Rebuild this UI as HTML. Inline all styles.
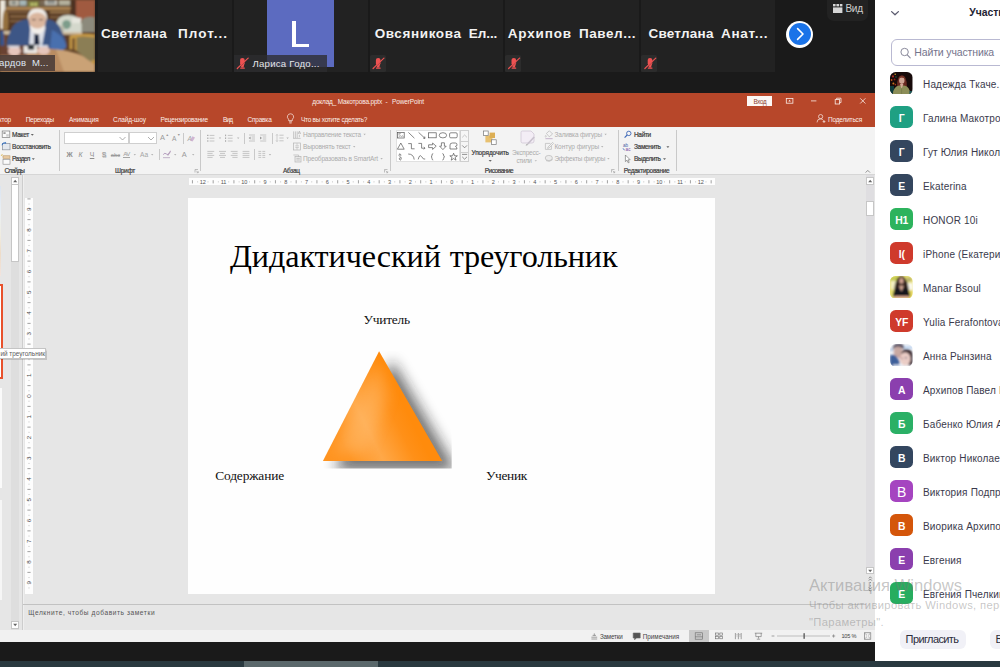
<!DOCTYPE html>
<html><head><meta charset="utf-8">
<style>
*{margin:0;padding:0;box-sizing:border-box}
html,body{width:1000px;height:667px;overflow:hidden;background:#1a1a1a;font-family:"Liberation Sans",sans-serif;}
.a{position:absolute}
#root{position:relative;width:1000px;height:667px;overflow:hidden;background:#1a1a1a}
.t{position:absolute;white-space:nowrap;line-height:1}
/* top strip */
.tile{position:absolute;top:0;height:72px;background:#222}
.tname{position:absolute;color:#f2f2f2;font-weight:bold;font-size:13.5px;white-space:pre;line-height:1;top:27px}
.mute{position:absolute;top:54.8px;width:15.5px;height:17px;background:#2c2c2c;border-radius:1.5px}
/* ppt */
#ppt{position:absolute;left:0;top:93px;width:875px;height:549px;background:#e6e6e6;overflow:hidden}
#ptitle{position:absolute;left:0;top:0;width:875px;height:34px;background:#b7472a}
#ribbon{position:absolute;left:0;top:34px;width:875px;height:48px;background:#f3f3f3;border-bottom:1px solid #d6d6d6}
.tab{position:absolute;top:21px;color:#fff;font-size:6.6px;line-height:1;white-space:nowrap;opacity:.92}
.rl{position:absolute;font-size:6.3px;color:#444;line-height:1;white-space:nowrap}
.rg{position:absolute;font-size:6.3px;color:#a8a8a8;line-height:1;white-space:nowrap}
.sep{position:absolute;top:37px;width:1px;height:41px;background:#c9c9c9}
/* panel */
#panel{position:absolute;left:875px;top:0;width:125px;height:660px;background:#fff;overflow:hidden}
.av{position:absolute;left:15px;width:23px;height:23px;border-radius:6px;color:#fff;font-weight:bold;font-size:9.5px;text-align:center;line-height:23px}
.pn{position:absolute;left:48px;font-size:9.6px;color:#3a3a44;white-space:nowrap;line-height:1}
</style></head><body>
<div id="root">

<!-- ===== TOP VIDEO STRIP ===== -->
<div class="tile" style="left:0;width:95px;overflow:hidden" id="vid">
<svg width="95" height="72" viewBox="0 0 95 72" style="position:absolute;left:0;top:0">
<defs><filter id="b1" x="-10%" y="-10%" width="120%" height="120%"><feGaussianBlur stdDeviation="0.8"/></filter></defs>
<rect width="95" height="72" fill="#5e4128"/>
<g filter="url(#b1)">
<!-- shelf back -->
<rect x="5" y="0" width="70" height="34" fill="#543923"/>
<rect x="0" y="0" width="5.4" height="29" fill="#ece7dc"/>
<rect x="5" y="0" width="68" height="7" fill="#6b5a44"/>
<rect x="9.6" y="0" width="8.6" height="5.6" fill="#dcd8cc"/>
<rect x="11" y="0.6" width="5.6" height="4" fill="#8c8f86"/>
<rect x="19.4" y="0" width="7" height="5.6" fill="#a4b6b8"/>
<rect x="27.6" y="0.8" width="11.4" height="6" fill="#7e7c42"/>
<circle cx="32" cy="4.2" r="1.5" fill="#c6cc74"/><circle cx="35.6" cy="4.2" r="1.5" fill="#c6cc74"/>
<rect x="40.6" y="0" width="4" height="5" fill="#7a6a58"/>
<rect x="45" y="0" width="12" height="5" fill="#c4c0b4"/>
<rect x="47" y="0" width="8" height="3.6" fill="#8a8e8a"/>
<rect x="59" y="0" width="11" height="5" fill="#b4b09c"/>
<rect x="6" y="7.2" width="66" height="2.6" fill="#b58a58"/>
<rect x="8" y="11" width="20" height="2" fill="#7c5c3c"/>
<rect x="10" y="15.4" width="18" height="2.2" fill="#8a6846"/>
<rect x="10" y="20" width="16" height="2.2" fill="#7c5c3c"/>
<rect x="50" y="11" width="20" height="2.4" fill="#94724a"/>
<rect x="50" y="16" width="9" height="2.2" fill="#7c5c3c"/>
<path d="M4.4 10 Q8.4 7.6 8.6 22 L7.6 33 L2.6 31 Q2 16 4.4 10 Z" fill="#94703c"/>
<rect x="70.6" y="0" width="5.4" height="22" fill="#4e3220"/>
<rect x="76" y="0" width="19" height="21" fill="#a05a40"/>
<!-- desk behind -->
<rect x="0" y="30" width="95" height="19" fill="#5c3e28"/>
<rect x="3" y="31" width="12" height="3.6" fill="#cdbb9e"/>
<rect x="58" y="31.6" width="24" height="3" fill="#d0bea2"/>
<rect x="2" y="34" width="3.4" height="14" fill="#7a4e2c"/>
<!-- paper stack & chair back -->
<path d="M56 24 Q58 15 68 15 Q79 15 82 24 L82 32 L56 32 Z" fill="#d4d8cc"/>
<ellipse cx="66.6" cy="24.6" rx="4.4" ry="4.6" fill="#7c9c8a"/>
<rect x="57" y="26" width="7" height="6" fill="#b8b8a8"/>
<rect x="72" y="18" width="9" height="5" fill="#e6e6de"/>
<path d="M81.6 19.4 Q88 15 95 17.6 L95 32 L81.6 32 Z" fill="#8c8a7c"/>
<!-- suit -->
<path d="M6.6 50 Q6 38 11 30 Q14 21.6 25 19.6 L50 19.6 Q59 22 62 32 Q66.6 40 66 47 L62 51.6 L50 49 L40 46 L18 46 Z" fill="#3d5786"/>
<path d="M52 30 Q62 34 66 44 L66 48 L60 51.6 L50 48 Z" fill="#4a70ae"/>
<path d="M0 30 L3.6 31.6 L4.4 46 L0 48.6 Z" fill="#35528c"/>
<path d="M30.4 27 L45.6 27 L42 46 L29 46 Z" fill="#dcdfe8"/>
<path d="M34.6 32.6 L38.6 32.6 L39.6 45 L34 45 Z" fill="#1c2640"/>
<!-- head -->
<ellipse cx="37.4" cy="20" rx="8.6" ry="11" fill="#dab69e"/>
<path d="M28 21 Q26.6 8.4 37.4 8.4 Q48.2 8.4 46.8 21 Q45.6 13 37.4 12.6 Q29.4 13 28 21 Z" fill="#efebe6"/>
<path d="M29.4 24 Q30.6 34 37.4 34.4 Q44.2 34 45.4 24 Q42.4 28.6 37.4 28.6 Q32.4 28.6 29.4 24 Z" fill="#f2eeea"/>
<rect x="32" y="19" width="3.6" height="1.2" fill="#6a5248"/><rect x="39.2" y="19" width="3.6" height="1.2" fill="#6a5248"/>
<!-- table -->
<path d="M0 49.6 L52 49 Q76 50 95 62.6 L95 72 L0 72 Z" fill="#b98c62"/>
<path d="M56 49.6 Q78 51 95 63 L95 72 L64 72 Z" fill="#caa276"/>
<rect x="0" y="45.6" width="27" height="10" fill="#6a4230"/>
<rect x="23.6" y="46" width="13.6" height="7.4" fill="#ebe8e4"/>
<rect x="27.8" y="44.6" width="6.4" height="5.2" rx="1" fill="#33383e"/>
<ellipse cx="14.4" cy="51" rx="6.4" ry="5" fill="#e6c6bc"/>
<ellipse cx="43.6" cy="50.4" rx="6.2" ry="4.4" fill="#e6c6bc"/>
<rect x="7.6" y="45.6" width="12" height="2" fill="#d8dce6"/>
<rect x="38" y="45.2" width="10" height="1.8" fill="#d8dce6"/>
<!-- chair -->
<path d="M76.4 37 L95 37 L95 64 L88 60 L76.4 51 Z" fill="#8b7e54"/>
<path d="M69.6 35.6 Q80 32.6 95 34.4 L95 37.6 Q80 36 76.6 37.6 L76.6 51 L74.6 50 L74.6 38 L72.4 38.6 L72.4 49.6 L69.6 49.6 Z" fill="#c69a46"/>
<rect x="92" y="60" width="3" height="4" fill="#c69a46"/>
</g>
</svg>
<div class="a" style="left:0;top:55.2px;width:55px;height:16.3px;background:rgba(80,64,58,.93)"></div>
<div class="t" style="left:-1px;top:58.4px;font-size:9.5px;color:#dfe8f4;white-space:pre;letter-spacing:.2px">ардов  М...</div>
</div>
<div class="tile" style="left:95px;width:137px;background:#212121"></div>
<div class="tile" style="left:234px;width:134px"></div>
<div class="tile" style="left:370px;width:133px"></div>
<div class="tile" style="left:505px;width:134px"></div>
<div class="tile" style="left:641px;width:134px"></div>
<div class="a" style="left:95px;top:0;width:2.5px;height:72px;background:#1b1b1b"></div>

<!-- L avatar -->
<div class="a" style="left:267px;top:0;width:67px;height:67px;background:#5c6bc0"></div>
<div class="a" style="left:291.9px;top:20.9px;width:4.6px;height:26.1px;background:#fff"></div>
<div class="a" style="left:291.9px;top:43.7px;width:16.8px;height:3.3px;background:#fff"></div>
<div class="a" style="left:234px;top:55px;width:93px;height:16.5px;background:rgba(45,45,48,.78)"></div>
<div class="t" style="left:252.5px;top:58.51px;font-size:9.6px;color:#e6e6e6;letter-spacing:0.244px;">Лариса Годо...</div>

<div class="tname" style="left:101px;letter-spacing:.34px">Светлана</div>
<div class="tname" style="left:178px;letter-spacing:1.05px">Плот...</div>
<div class="tname" style="left:374.7px;letter-spacing:.61px">Овсяникова</div>
<div class="tname" style="left:468.8px;letter-spacing:-.08px">Ел...</div>
<div class="tname" style="left:507.8px;letter-spacing:.81px">Архипов</div>
<div class="tname" style="left:579px;letter-spacing:.55px">Павел...</div>
<div class="tname" style="left:648.4px;letter-spacing:.24px">Светлана</div>
<div class="tname" style="left:720.9px;letter-spacing:.77px">Анат...</div>

<!-- mute icons -->
<div class="mute" style="left:234px;background:none"></div>
<div class="mute" style="left:370px"></div>
<div class="mute" style="left:505px"></div>
<div class="mute" style="left:641px"></div>
<svg class="a" style="left:0;top:0" width="800" height="72" viewBox="0 0 800 72">
<defs><g id="mic"><rect x="-2.3" y="-5.5" width="4.6" height="7.6" rx="2.2" fill="#ee5252"/><path d="M-1.7 1.6 H1.7 L1.1 4.2 H-1.1 Z" fill="#ee5252"/><rect x="-2.2" y="4" width="4.6" height="1.4" rx=".4" fill="#ee5252"/><path d="M-5.1 5.1 L5.8 -5.3" stroke="#ee5252" stroke-width="1.3" stroke-linecap="round"/><path d="M-4.4 5.4 L6.3 -4.8" stroke="#2c2c2c" stroke-width=".5" opacity=".6"/></g></defs>
<use href="#mic" x="242.4" y="63.4"/>
<use href="#mic" x="378.2" y="63.4"/>
<use href="#mic" x="513.8" y="63.4"/>
<use href="#mic" x="650" y="63.4"/>
</svg>

<!-- next arrow -->
<div class="a" style="left:786px;top:20.5px;width:27px;height:27px;border-radius:50%;background:#fff"></div>
<div class="a" style="left:788.5px;top:23px;width:22px;height:22px;border-radius:50%;background:#1a73e8"></div>
<svg class="a" style="left:788.5px;top:23px" width="22" height="22" viewBox="0 0 22 22"><path d="M8.6 5.6 L14 11 L8.6 16.4" stroke="#fff" stroke-width="1.6" fill="none" stroke-linecap="round" stroke-linejoin="round"/></svg>

<!-- Vid button -->
<div class="a" style="left:827px;top:-6px;width:41px;height:27px;background:#222;border-radius:7px"></div>
<svg class="a" style="left:833px;top:4px" width="10" height="10" viewBox="0 0 10 10"><rect x="0" y="0" width="2.6" height="2.4" fill="#d6d6d6"/><rect x="3.4" y="0" width="2.6" height="2.4" fill="#d6d6d6"/><rect x="6.8" y="0" width="2.6" height="2.4" fill="#d6d6d6"/><rect x="0" y="3.4" width="9.4" height="5.6" fill="#d6d6d6"/></svg>
<div class="t" style="left:845.5px;top:3.60px;font-size:10px;color:#cfcfcf;letter-spacing:-0.297px;">Вид</div>

<!-- ===== POWERPOINT ===== -->
<div id="ppt">
  <div id="ptitle"></div>
  <div id="ribbon"></div>
</div>
<!-- title bar text (absolute page coords) -->
<div class="t" style="right:989px;top:116.5px;font-size:6.5px;color:#fbeee9;letter-spacing:-.2px">Конструктор</div>
<div class="t" style="left:25.7px;top:116.51px;font-size:6.5px;color:#fbeee9;letter-spacing:-0.271px;">Переходы</div>
<div class="t" style="left:68.9px;top:116.51px;font-size:6.5px;color:#fbeee9;letter-spacing:-0.088px;">Анимация</div>
<div class="t" style="left:113.1px;top:116.51px;font-size:6.5px;color:#fbeee9;letter-spacing:-0.113px;">Слайд-шоу</div>
<div class="t" style="left:160.6px;top:116.51px;font-size:6.5px;color:#fbeee9;letter-spacing:-0.208px;">Рецензирование</div>
<div class="t" style="left:222.9px;top:116.51px;font-size:6.5px;color:#fbeee9;letter-spacing:-0.783px;">Вид</div>
<div class="t" style="left:247.4px;top:116.51px;font-size:6.5px;color:#fbeee9;letter-spacing:-0.183px;">Справка</div>
<div class="t" style="left:301px;top:116.51px;font-size:6.5px;color:#fbeee9;letter-spacing:-0.265px;">Что вы хотите сделать?</div>
<div class="t" style="left:827.9px;top:116.51px;font-size:6.5px;color:#fbeee9;letter-spacing:-0.178px;">Поделиться</div>
<div class="t" style="left:312.3px;top:99.30px;font-size:6.5px;color:#fbeee9;letter-spacing:-0.183px;">доклад_ Макотрова.pptx</div>
<div class="t" style="left:385.5px;top:99.30px;font-size:6.5px;color:#fbeee9;">-</div>
<div class="t" style="left:392px;top:99.30px;font-size:6.5px;color:#fbeee9;letter-spacing:-0.139px;">PowerPoint</div>
<!-- bulb -->
<svg class="a" style="left:286px;top:113px" width="9" height="11" viewBox="0 0 9 11"><path d="M4.5 0.8 A3 3 0 0 1 6.4 6.2 V7.6 H2.6 V6.2 A3 3 0 0 1 4.5 0.8 Z" fill="none" stroke="#fbeee9" stroke-width=".7"/><path d="M3 8.8 H6 M3.4 10 H5.6" stroke="#fbeee9" stroke-width=".7"/></svg>
<!-- Vhod button -->
<div class="a" style="left:747.3px;top:96px;width:25px;height:10.2px;background:#fdf8f5"></div>
<div class="t" style="left:753.5px;top:98.81px;font-size:6.3px;color:#8a4030;letter-spacing:-0.383px;">Вход</div>
<!-- window controls -->
<svg class="a" style="left:780px;top:94px" width="95" height="30" viewBox="0 0 95 30">
<rect x="6.3" y="4.4" width="6.6" height="4.8" fill="none" stroke="#fbeee9" stroke-width=".8"/><path d="M8.3 7.6 L9.6 5.8 L10.9 7.6 Z" fill="#fbeee9"/>
<path d="M31 6.9 H36.4" stroke="#fbeee9" stroke-width=".8"/>
<rect x="55.2" y="5.6" width="4.4" height="4.4" fill="none" stroke="#fbeee9" stroke-width=".8"/><path d="M56.6 5.6 V4.2 H61 V8.6 H59.6" fill="none" stroke="#fbeee9" stroke-width=".8"/>
<path d="M80.2 4.3 L85.4 9.5 M85.4 4.3 L80.2 9.5" stroke="#fbeee9" stroke-width=".8"/>
<circle cx="40.6" cy="22.6" r="2.1" fill="none" stroke="#fbeee9" stroke-width=".7"/><path d="M37 28.4 Q37 24.9 40.6 24.9 Q42.6 24.9 43.4 26.4" fill="none" stroke="#fbeee9" stroke-width=".7"/><path d="M42.6 27.6 H45.4 M44 26.2 V29" stroke="#fbeee9" stroke-width=".7"/>
</svg>

<!-- ribbon: slides group -->
<svg class="a" style="left:0;top:128px" width="12" height="40" viewBox="0 0 12 40">
<rect x="2.2" y="3" width="7.6" height="6.6" fill="#fafafa" stroke="#7d7d7d" stroke-width=".7"/><rect x="3.4" y="4.2" width="2.2" height="1.8" fill="#9a9a9a"/><rect x="6.2" y="6.2" width="2.6" height="2.4" fill="#cfcfcf"/>
<rect x="2.4" y="15.6" width="7.6" height="6.2" fill="#e4e8ee" stroke="#8a9099" stroke-width=".7"/><path d="M2 17.2 Q2.4 14.4 5.2 14.8" fill="none" stroke="#2f6fc4" stroke-width="1"/><path d="M5 13.8 L6.4 14.9 L4.9 15.9 Z" fill="#2f6fc4"/>
<rect x="3" y="27.8" width="7" height="2.6" fill="#e8c9a0" stroke="#b08a58" stroke-width=".5"/><rect x="3" y="31.6" width="7" height="4.6" fill="#fafafa" stroke="#8a8a8a" stroke-width=".6"/><path d="M1.4 27.2 L2.4 26.2 M2.4 28.2 L1.4 27.2" stroke="#d8a520" stroke-width=".8"/>
</svg>
<div class="t" style="left:12.1px;top:131.91px;font-size:6.5px;color:#3d3d3d;letter-spacing:-0.302px;-webkit-text-stroke:.2px #3d3d3d">Макет</div>
<div class="t" style="left:12.1px;top:144.00px;font-size:6.5px;color:#3d3d3d;letter-spacing:-0.248px;-webkit-text-stroke:.2px #3d3d3d">Восстановить</div>
<div class="t" style="left:12.1px;top:156.10px;font-size:6.5px;color:#3d3d3d;letter-spacing:-0.637px;-webkit-text-stroke:.2px #3d3d3d">Раздел</div>
<div class="t" style="left:4.4px;top:168.10px;font-size:6.5px;color:#3d3d3d;letter-spacing:-0.741px;-webkit-text-stroke:.2px #3d3d3d">Слайды</div>
<div class="t" style="left:115px;top:168.10px;font-size:6.5px;color:#3d3d3d;letter-spacing:-0.273px;-webkit-text-stroke:.2px #3d3d3d">Шрифт</div>
<div class="t" style="left:283px;top:168.10px;font-size:6.5px;color:#3d3d3d;letter-spacing:-0.309px;-webkit-text-stroke:.2px #3d3d3d">Абзац</div>
<div class="t" style="left:484.7px;top:168.10px;font-size:6.5px;color:#3d3d3d;letter-spacing:-0.469px;-webkit-text-stroke:.2px #3d3d3d">Рисование</div>
<div class="t" style="left:623.7px;top:168.10px;font-size:6.5px;color:#3d3d3d;letter-spacing:-0.270px;-webkit-text-stroke:.2px #3d3d3d">Редактирование</div>
<div class="t" style="left:471.5px;top:149.91px;font-size:6.5px;color:#3d3d3d;letter-spacing:-0.129px;-webkit-text-stroke:.2px #3d3d3d">Упорядочить</div>
<div class="t" style="left:634px;top:131.91px;font-size:6.5px;color:#3d3d3d;letter-spacing:-0.341px;-webkit-text-stroke:.2px #3d3d3d">Найти</div>
<div class="t" style="left:634px;top:144.00px;font-size:6.5px;color:#3d3d3d;letter-spacing:-0.317px;-webkit-text-stroke:.2px #3d3d3d">Заменить</div>
<div class="t" style="left:634px;top:156.10px;font-size:6.5px;color:#3d3d3d;letter-spacing:-0.429px;-webkit-text-stroke:.2px #3d3d3d">Выделить</div>
<div class="t" style="left:303px;top:131.91px;font-size:6.5px;color:#ababab;letter-spacing:-0.207px;">Направление текста</div>
<div class="t" style="left:303px;top:144.00px;font-size:6.5px;color:#ababab;letter-spacing:-0.203px;">Выровнять текст</div>
<div class="t" style="left:303px;top:156.10px;font-size:6.5px;color:#ababab;letter-spacing:-0.167px;">Преобразовать в SmartArt</div>
<div class="t" style="left:512px;top:149.91px;font-size:6.5px;color:#ababab;letter-spacing:-0.183px;">Экспресс-</div>
<div class="t" style="left:516.4px;top:158.31px;font-size:6.5px;color:#ababab;letter-spacing:-0.424px;">стили</div>
<div class="t" style="left:554.4px;top:131.91px;font-size:6.5px;color:#ababab;letter-spacing:-0.149px;">Заливка фигуры</div>
<div class="t" style="left:554.4px;top:144.00px;font-size:6.5px;color:#ababab;letter-spacing:-0.054px;">Контур фигуры</div>
<div class="t" style="left:554.4px;top:156.10px;font-size:6.5px;color:#ababab;letter-spacing:-0.244px;">Эффекты фигуры</div>
<!-- separators -->
<div class="sep" style="left:59px;top:130px"></div>
<div class="sep" style="left:200px;top:130px"></div>
<div class="sep" style="left:390px;top:130px"></div>
<div class="sep" style="left:617.5px;top:130px"></div>
<div class="sep" style="left:675.5px;top:130px"></div>
<div class="sep" style="left:182.5px;top:133px;height:11px"></div>
<div class="sep" style="left:159px;top:149px;height:11px"></div>
<div class="sep" style="left:243.8px;top:133px;height:11px"></div>
<div class="sep" style="left:271.6px;top:133px;height:11px"></div>
<div class="sep" style="left:254px;top:149px;height:11px"></div>
<!-- font boxes -->
<div class="a" style="left:63.5px;top:132px;width:65px;height:12.2px;background:#fff;border:1px solid #cfcfcf"></div>
<div class="a" style="left:128.8px;top:132px;width:28px;height:12.2px;background:#fff;border:1px solid #cfcfcf"></div>
<!-- dropdown arrows & small icons layer -->
<svg class="a" style="left:0;top:127px" width="875" height="48" viewBox="0 127 875 48">
<g fill="none" stroke="#8c8c8c" stroke-width=".7">
<path d="M119.5 137 L122.5 140 L125.5 137"/><path d="M148 137 L151 140 L154 137"/>
</g>
<g fill="#666">
<path d="M30.8 134 h3 l-1.5 1.7z"/><path d="M31.8 158.2 h3 l-1.5 1.7z"/>
<path d="M488.6 160 h3.2 l-1.6 1.8z"/>
<path d="M666.4 146.2 h3 l-1.5 1.7z"/><path d="M663 158.2 h3 l-1.5 1.7z"/>
</g>
<g fill="#b5b5b5">
<path d="M133.6 154 h2.4 l-1.2 1.4z"/><path d="M151 154 h2.4 l-1.2 1.4z"/><path d="M174 154 h2.4 l-1.2 1.4z"/><path d="M192 154 h2.4 l-1.2 1.4z"/>
<path d="M218.8 137.6 h2.4 l-1.2 1.4z"/><path d="M237 137.6 h2.4 l-1.2 1.4z"/><path d="M286.4 137.6 h2.4 l-1.2 1.4z"/><path d="M268.8 154 h2.4 l-1.2 1.4z"/>
<path d="M363.4 133.8 h2.4 l-1.2 1.4z"/><path d="M353 146 h2.4 l-1.2 1.4z"/><path d="M380.4 158 h2.4 l-1.2 1.4z"/>
<path d="M534.6 160.2 h2.4 l-1.2 1.4z"/>
<path d="M604.4 133.8 h2.4 l-1.2 1.4z"/><path d="M601 146 h2.4 l-1.2 1.4z"/><path d="M607.2 158 h2.4 l-1.2 1.4z"/>
</g>
<!-- dialog launchers -->
<g fill="none" stroke="#9a9a9a" stroke-width=".6">
<path d="M195 169.5 h3 M195 169.5 v3 M196.2 170.7 l2 2 M198.2 171.2 v1.5 h-1.5"/>
<path d="M384.5 169.5 h3 M384.5 169.5 v3 M385.7 170.7 l2 2 M387.7 171.2 v1.5 h-1.5"/>
<path d="M611.5 169.5 h3 M611.5 169.5 v3 M612.7 170.7 l2 2 M614.7 171.2 v1.5 h-1.5"/>
<path d="M865.6 172.6 L867.8 170.4 L870 172.6" stroke="#777" stroke-width=".8"/>
</g>
</svg>
<!-- font row letters -->
<div class="t" style="left:160px;top:134.48px;font-size:7.4px;color:#9a9a9a;">A</div><div class="t" style="left:165.6px;top:133.6px;font-size:3.6px;color:#9a9a9a">▲</div>
<div class="t" style="left:172px;top:136.25px;font-size:6.6px;color:#9a9a9a;">A</div><div class="t" style="left:177px;top:133.8px;font-size:3.6px;color:#9a9a9a">▼</div>
<div class="t" style="left:187.4px;top:135.85px;font-size:6.6px;color:#a8a8a8;font-style:italic">A</div>
<svg class="a" style="left:189px;top:135px" width="7" height="7" viewBox="0 0 7 7"><path d="M1 5.5 L3.4 1.2 L6 2.6 L3.6 6.4 Z" fill="#c7a6c9" opacity=".8"/></svg>
<div class="t" style="left:66.6px;top:152.15px;font-size:6.8px;color:#8e8e8e;font-weight:bold;">Ж</div>
<div class="t" style="left:78.4px;top:152.15px;font-size:6.8px;color:#8e8e8e;font-style:italic">К</div>
<div class="t" style="left:89.8px;top:151.95px;font-size:6.8px;color:#8e8e8e;text-decoration:underline">Ч</div>
<div class="t" style="left:101.8px;top:152.15px;font-size:6.8px;color:#8e8e8e;text-shadow:.5px .5px 0 #bbb">S</div>
<div class="t" style="left:110.8px;top:152.68px;font-size:5.8px;color:#9a9a9a;text-decoration:line-through">abc</div>
<div class="t" style="left:123.2px;top:151.37px;font-size:6px;color:#9a9a9a;letter-spacing:-.4px">AV</div>
<div class="a" style="left:123.4px;top:157.4px;width:7px;height:.8px;background:#a5a5a5"></div>
<div class="t" style="left:140px;top:152.25px;font-size:6.6px;color:#a5a5a5;">Aa</div>
<div class="t" style="left:181.8px;top:150.68px;font-size:7.4px;color:#9a9a9a;">A</div>
<svg class="a" style="left:162px;top:149px" width="10" height="11" viewBox="0 0 10 11"><path d="M1.2 5.6 Q3 3.2 4.4 5 T7.8 3.6" fill="none" stroke="#9a7aa8" stroke-width=".7"/><path d="M5.2 6.2 L8.2 1.6 L9 2.2 L6.2 6.8 Z" fill="#b7a0bd"/><rect x="1" y="8" width="7" height="1.2" fill="#c9bccf"/></svg>
<!-- paragraph icons -->
<svg class="a" style="left:204px;top:130px" width="92" height="34" viewBox="204 130 92 34">
<g stroke="#b9b9b9" stroke-width=".8" fill="none">
<path d="M209.6 135.4 H214.4 M209.6 138.2 H214.4 M209.6 141 H214.4"/>
<path d="M227.8 135.4 H232.6 M227.8 138.2 H232.6 M227.8 141 H232.6"/>
<path d="M249 135 H255 M251.6 137 H255 M251.6 139 H255 M249 141 H255"/>
<path d="M260.2 135 H266.2 M262.8 137 H266.2 M262.8 139 H266.2 M260.2 141 H266.2"/>
<path d="M279.4 135.2 H283.6 M279.4 138 H283.6 M279.4 140.8 H283.6"/>
<path d="M277 134.4 V141.6 M276 135.6 L277 134.4 L278 135.6 M276 140.4 L277 141.6 L278 140.4" stroke-width=".6"/>
<path d="M207.4 151.4 H214.2 M207.4 153.4 H212.6 M207.4 155.4 H214.2 M207.4 157.4 H212.6"/>
<path d="M219 151.4 H226 M220 153.4 H225 M219 155.4 H226 M220 157.4 H225"/>
<path d="M230.8 151.4 H237.6 M232.4 153.4 H237.6 M230.8 155.4 H237.6 M232.4 157.4 H237.6"/>
<path d="M242.6 151.4 H249.4 M242.6 153.4 H249.4 M242.6 155.4 H249.4 M242.6 157.4 H249.4"/>
<path d="M258.4 151.4 H261.2 M258.4 153.4 H261.2 M258.4 155.4 H261.2 M258.4 157.4 H261.2 M262.4 151.4 H265.2 M262.4 153.4 H265.2 M262.4 155.4 H265.2 M262.4 157.4 H265.2"/>
</g>
<g fill="#9c9c9c"><rect x="207.2" y="134.8" width="1.2" height="1.2"/><rect x="207.2" y="137.6" width="1.2" height="1.2"/><rect x="207.2" y="140.4" width="1.2" height="1.2"/>
<rect x="225.2" y="134.6" width=".9" height="1.6"/><rect x="225.2" y="137.4" width=".9" height="1.6"/><rect x="225.2" y="140.2" width=".9" height="1.6"/>
<path d="M248.6 138 L250.6 136.6 V139.4 Z"/><path d="M262 138 L260 136.6 V139.4 Z"/></g>
</svg>
<!-- text dir / align / smartart icons -->
<svg class="a" style="left:292px;top:129px" width="12" height="36" viewBox="292 129 12 36">
<g stroke="#b5b5b5" stroke-width=".7" fill="none">
<path d="M293.6 131.4 V138 M295.4 131.4 V138 M297.2 131.4 V138 M293 138.4 H300.6"/><path d="M299.4 131 L298.2 134 M299.4 131 L300.6 134 M298.6 133 H300.2"/><path d="M299.4 134.8 V137.2"/>
<rect x="293.6" y="143" width="6.8" height="7"/><path d="M295.4 145.8 H298.8 M295.4 147.4 H298.8 M297 143.4 V144.8 M297 149.6 V148.2"/>
<rect x="295" y="156.4" width="6" height="5.6" fill="#ececec"/><path d="M293.4 155 H298.6 V157"/><path d="M296.4 158.4 H299.8 M296.4 160 H299.8"/>
</g></svg>
<!-- shapes gallery -->
<div class="a" style="left:395.5px;top:130.4px;width:64.5px;height:32px;background:#fff;border:1px solid #e0e0e0"></div>
<div class="a" style="left:460.4px;top:130.4px;width:8.4px;height:32px;background:#f6f6f6;border:1px solid #cfcfcf"></div>
<div class="a" style="left:460.4px;top:141px;width:8.4px;height:1px;background:#cfcfcf"></div>
<div class="a" style="left:460.4px;top:151.6px;width:8.4px;height:1px;background:#cfcfcf"></div>
<svg class="a" style="left:395px;top:130px" width="76" height="34" viewBox="395 130 76 34">
<g stroke="#555" stroke-width=".7" fill="none">
<rect x="397.4" y="132.6" width="6.8" height="5.4"/><path d="M398.4 133.6 h2.4 M398.4 134.8 h1.4 M398.6 137 l1.6 -1.4 l1.2 1 l1 -1 l1 1.4" stroke-width=".5"/>
<path d="M408.4 132.4 L414.4 138.2"/>
<path d="M418.6 132.4 L425 138.4 M425 138.4 l-.3 -1.9 M425 138.4 l-1.9 -.3"/>
<rect x="428.6" y="132.8" width="7.6" height="5"/>
<ellipse cx="442.9" cy="135.3" rx="3.7" ry="2.6"/>
<rect x="449.6" y="132.8" width="7.6" height="5" rx="1.2"/>
<path d="M400.8 143 L397.4 149.2 H404.2 Z"/>
<path d="M408.2 143.6 H411.4 V148.8 H414.6"/>
<path d="M418.4 143.4 H421.6 V148.2 H425 M425 148.2 l-1.2 -1.2 M425 148.2 l-1.2 1.2"/>
<path d="M428.6 144.8 H432.6 V143 L436.2 146.2 L432.6 149.4 V147.6 H428.6 Z"/>
<path d="M441.4 142.8 H444.4 V146.2 H446.2 L442.9 149.6 L439.6 146.2 H441.4 Z"/>
<path d="M450 149 V145 Q450 143 452.4 143 H455.4 Q457 143 457 144.8 Q457 146.4 455.4 146.4 Q457 147 457 149 Z"/>
<path d="M399.6 153.8 Q398.2 155.6 400 156.6 Q402 157.6 401 159.6 Q400.4 160.6 399.4 159.4 Q398.6 158 400.6 157.6 M399.6 153.8 Q401.4 154.4 400.8 155.8"/>
<path d="M408.2 154 Q413.6 154 414.2 159.6"/>
<path d="M418.2 159.4 Q419.6 153.8 421.6 156.6 Q423.6 160.2 425.2 159"/>
<path d="M433.2 153.6 Q432 153.6 432 155 Q432 156.8 431 156.8 Q432 156.8 432 158.6 Q432 160 433.2 160"/>
<path d="M442.4 153.6 Q443.6 153.6 443.6 155 Q443.6 156.8 444.6 156.8 Q443.6 156.8 443.6 158.6 Q443.6 160 442.4 160"/>
<path d="M453.6 153.2 L454.6 155.8 L457.4 155.8 L455.2 157.4 L456 160.2 L453.6 158.6 L451.2 160.2 L452 157.4 L449.8 155.8 L452.6 155.8 Z"/>
</g>
<g stroke="#b0b0b0" stroke-width=".7" fill="none"><path d="M462.2 137.4 L464.6 135 L467 137.4"/></g>
<g stroke="#666" stroke-width=".7" fill="none"><path d="M462.2 145.4 L464.6 147.8 L467 145.4"/><path d="M462.2 156.8 L464.6 159.2 L467 156.8 M462 154.4 H467.2"/></g>
</svg>
<!-- arrange icon -->
<svg class="a" style="left:482px;top:129px" width="18" height="18" viewBox="0 0 18 18"><rect x="3.4" y="6.4" width="7" height="7" fill="#e8c170"/><rect x="7.6" y="3.6" width="5.4" height="5.4" fill="#dcae54"/><rect x="1.6" y="2" width="4.6" height="4.6" fill="#fff" stroke="#777" stroke-width=".7"/><rect x="9.4" y="10.8" width="4.8" height="4.8" fill="#fff" stroke="#777" stroke-width=".7"/></svg>
<!-- express styles icon -->
<svg class="a" style="left:518px;top:129px" width="20" height="19" viewBox="0 0 20 19"><path d="M3 3.4 Q3 2 4.4 2 H13 L16 5 V12 Q16 14 14 14 H4.6 Q3 14 3 12.4 Z" fill="#f3edf5" stroke="#cfc6d4" stroke-width=".8"/><path d="M9 14.6 L15.6 7.6 L16.8 8.6 L10.4 15.6 Z" fill="#c9c2cd"/><path d="M7.6 16.4 Q8.6 14.4 10 15.4 Q9.6 16.8 7.6 16.4 Z" fill="#aaa"/></svg>
<!-- fill / outline / effects icons -->
<svg class="a" style="left:543px;top:129px" width="12" height="36" viewBox="543 129 12 36">
<g stroke="#b8b8b8" stroke-width=".7" fill="none"><path d="M546.4 133.4 L549.4 130.8 L552.6 134 L549.2 136.8 Z"/><path d="M545 136.4 Q545.6 134.6 546.4 136.4 Q545.8 137.6 545 136.4"/><path d="M545.4 138.6 H552.6" stroke-width="1.2" stroke="#cdbfd2"/>
<path d="M545.4 143.4 H550.4 M545.4 143.4 V149.4 H551.4 V146"/><path d="M548 147 L552.6 142.4 L553.6 143.4 L549 148 L547.6 148.4 Z"/>
<ellipse cx="548.8" cy="158" rx="3.6" ry="2.6" fill="#ececec"/><path d="M546 160.6 Q549.4 162.6 552.6 159.6"/></g></svg>
<!-- find/replace/select icons -->
<svg class="a" style="left:621px;top:129px" width="13" height="36" viewBox="621 129 13 36">
<circle cx="628.8" cy="133.4" r="2.2" fill="none" stroke="#3d68b8" stroke-width=".9"/><path d="M627.2 135 L624.6 137.6" stroke="#3d68b8" stroke-width="1.1"/>
<text x="623" y="146.6" font-size="4.6" fill="#4d5fa8" font-family="Liberation Sans">ab</text><text x="625.6" y="150.6" font-size="4.6" fill="#7a4aa0" font-family="Liberation Sans">ac</text><path d="M623 148 Q623 150 625 150" fill="none" stroke="#3d68b8" stroke-width=".6"/>
<path d="M625.4 155 L625.4 161.6 L627 160.2 L628.2 162.8 L629.2 162.4 L628 159.8 L630.2 159.8 Z" fill="#fff" stroke="#666" stroke-width=".6"/>
</svg>
<!-- ===== EDIT AREA ===== -->
<div class="a" style="left:0;top:175px;width:22px;height:455px;background:#e6e6e6"></div>
<div class="a" style="left:21.5px;top:175px;width:1px;height:455px;background:#cdcdcd"></div>
<div class="a" style="left:22.5px;top:175px;width:1px;height:455px;background:#efefef"></div>
<div class="a" style="left:0;top:185.6px;width:1.4px;height:90px;background:linear-gradient(#dbe4f0 0%,#eaf0f4 30%,#f0ece0 55%,#eedcc8 75%,#f2e4de 100%)"></div>
<div class="a" style="left:-6px;top:283.6px;width:9px;height:95.5px;background:#fff;border:2px solid #e8512c"></div>
<div class="a" style="left:0;top:388px;width:1.5px;height:100px;background:#fafafa"></div>
<div class="a" style="left:0;top:500px;width:1.5px;height:100px;background:#f6f6f6"></div>
<div class="a" style="left:11px;top:177px;width:8.4px;height:453px;background:#dedede"></div>
<div class="a" style="left:11px;top:177px;width:8.4px;height:7.6px;background:#fff;border:1px solid #c6c6c6"></div>
<div class="a" style="left:11px;top:184.6px;width:8.4px;height:77.6px;background:#fff;border:1px solid #c6c6c6;border-top:none"></div>
<svg class="a" style="left:11px;top:177px" width="9" height="8" viewBox="0 0 9 8"><path d="M2.2 5.2 L4.2 2.8 L6.2 5.2 Z" fill="#666"/></svg>
<div class="a" style="left:11px;top:621.4px;width:8.4px;height:7.6px;background:#fff;border:1px solid #c6c6c6"></div>
<svg class="a" style="left:11px;top:621.4px" width="9" height="8" viewBox="0 0 9 8"><path d="M2.2 2.8 L4.2 5.2 L6.2 2.8 Z" fill="#666"/></svg>

<div class="a" style="left:189px;top:178.3px;width:526px;height:7px;background:#fdfdfd"></div>
<div class="a" style="left:25.4px;top:198px;width:7.2px;height:396px;background:#fdfdfd"></div>
<svg class="a" style="left:0;top:175px" width="875" height="425" viewBox="0 175 875 425"><path d="M192.43 180.2 V183.4 M213.18 180.2 V183.4 M233.93 180.2 V183.4 M254.68 180.2 V183.4 M275.43 180.2 V183.4 M296.18 180.2 V183.4 M316.93 180.2 V183.4 M337.68 180.2 V183.4 M358.43 180.2 V183.4 M379.18 180.2 V183.4 M399.93 180.2 V183.4 M420.68 180.2 V183.4 M441.43 180.2 V183.4 M462.18 180.2 V183.4 M482.93 180.2 V183.4 M503.68 180.2 V183.4 M524.42 180.2 V183.4 M545.17 180.2 V183.4 M565.92 180.2 V183.4 M586.67 180.2 V183.4 M607.42 180.2 V183.4 M628.17 180.2 V183.4 M648.92 180.2 V183.4 M669.67 180.2 V183.4 M690.42 180.2 V183.4 M711.17 180.2 V183.4" stroke="#7a7a7a" stroke-width=".7"/><path d="M197.61 181.5 V182.3 M207.99 181.5 V182.3 M218.36 181.5 V182.3 M228.74 181.5 V182.3 M239.11 181.5 V182.3 M249.49 181.5 V182.3 M259.86 181.5 V182.3 M270.24 181.5 V182.3 M280.61 181.5 V182.3 M290.99 181.5 V182.3 M301.36 181.5 V182.3 M311.74 181.5 V182.3 M322.11 181.5 V182.3 M332.49 181.5 V182.3 M342.86 181.5 V182.3 M353.24 181.5 V182.3 M363.61 181.5 V182.3 M373.99 181.5 V182.3 M384.36 181.5 V182.3 M394.74 181.5 V182.3 M405.11 181.5 V182.3 M415.49 181.5 V182.3 M425.86 181.5 V182.3 M436.24 181.5 V182.3 M446.61 181.5 V182.3 M456.99 181.5 V182.3 M467.36 181.5 V182.3 M477.74 181.5 V182.3 M488.11 181.5 V182.3 M498.49 181.5 V182.3 M508.86 181.5 V182.3 M519.24 181.5 V182.3 M529.61 181.5 V182.3 M539.99 181.5 V182.3 M550.36 181.5 V182.3 M560.74 181.5 V182.3 M571.11 181.5 V182.3 M581.49 181.5 V182.3 M591.86 181.5 V182.3 M602.24 181.5 V182.3 M612.61 181.5 V182.3 M622.99 181.5 V182.3 M633.36 181.5 V182.3 M643.74 181.5 V182.3 M654.11 181.5 V182.3 M664.49 181.5 V182.3 M674.86 181.5 V182.3 M685.24 181.5 V182.3 M695.61 181.5 V182.3 M705.99 181.5 V182.3" stroke="#969696" stroke-width=".7"/><text x="202.80" y="183.9" font-size="5.6" fill="#555" text-anchor="middle" font-family="Liberation Sans">12</text><text x="223.55" y="183.9" font-size="5.6" fill="#555" text-anchor="middle" font-family="Liberation Sans">11</text><text x="244.30" y="183.9" font-size="5.6" fill="#555" text-anchor="middle" font-family="Liberation Sans">10</text><text x="265.05" y="183.9" font-size="5.6" fill="#555" text-anchor="middle" font-family="Liberation Sans">9</text><text x="285.80" y="183.9" font-size="5.6" fill="#555" text-anchor="middle" font-family="Liberation Sans">8</text><text x="306.55" y="183.9" font-size="5.6" fill="#555" text-anchor="middle" font-family="Liberation Sans">7</text><text x="327.30" y="183.9" font-size="5.6" fill="#555" text-anchor="middle" font-family="Liberation Sans">6</text><text x="348.05" y="183.9" font-size="5.6" fill="#555" text-anchor="middle" font-family="Liberation Sans">5</text><text x="368.80" y="183.9" font-size="5.6" fill="#555" text-anchor="middle" font-family="Liberation Sans">4</text><text x="389.55" y="183.9" font-size="5.6" fill="#555" text-anchor="middle" font-family="Liberation Sans">3</text><text x="410.30" y="183.9" font-size="5.6" fill="#555" text-anchor="middle" font-family="Liberation Sans">2</text><text x="431.05" y="183.9" font-size="5.6" fill="#555" text-anchor="middle" font-family="Liberation Sans">1</text><text x="451.80" y="183.9" font-size="5.6" fill="#555" text-anchor="middle" font-family="Liberation Sans">0</text><text x="472.55" y="183.9" font-size="5.6" fill="#555" text-anchor="middle" font-family="Liberation Sans">1</text><text x="493.30" y="183.9" font-size="5.6" fill="#555" text-anchor="middle" font-family="Liberation Sans">2</text><text x="514.05" y="183.9" font-size="5.6" fill="#555" text-anchor="middle" font-family="Liberation Sans">3</text><text x="534.80" y="183.9" font-size="5.6" fill="#555" text-anchor="middle" font-family="Liberation Sans">4</text><text x="555.55" y="183.9" font-size="5.6" fill="#555" text-anchor="middle" font-family="Liberation Sans">5</text><text x="576.30" y="183.9" font-size="5.6" fill="#555" text-anchor="middle" font-family="Liberation Sans">6</text><text x="597.05" y="183.9" font-size="5.6" fill="#555" text-anchor="middle" font-family="Liberation Sans">7</text><text x="617.80" y="183.9" font-size="5.6" fill="#555" text-anchor="middle" font-family="Liberation Sans">8</text><text x="638.55" y="183.9" font-size="5.6" fill="#555" text-anchor="middle" font-family="Liberation Sans">9</text><text x="659.30" y="183.9" font-size="5.6" fill="#555" text-anchor="middle" font-family="Liberation Sans">10</text><text x="680.05" y="183.9" font-size="5.6" fill="#555" text-anchor="middle" font-family="Liberation Sans">11</text><text x="700.80" y="183.9" font-size="5.6" fill="#555" text-anchor="middle" font-family="Liberation Sans">12</text><path d="M27.4 198.90 H30.6 M27.4 219.62 H30.6 M27.4 240.38 H30.6 M27.4 261.12 H30.6 M27.4 281.88 H30.6 M27.4 302.62 H30.6 M27.4 323.38 H30.6 M27.4 344.12 H30.6 M27.4 364.88 H30.6 M27.4 385.62 H30.6 M27.4 406.38 H30.6 M27.4 427.12 H30.6 M27.4 447.88 H30.6 M27.4 468.62 H30.6 M27.4 489.38 H30.6 M27.4 510.12 H30.6 M27.4 530.88 H30.6 M27.4 551.62 H30.6 M27.4 572.38 H30.6" stroke="#7a7a7a" stroke-width=".7"/><path d="M28.6 204.06 H29.4 M28.6 214.44 H29.4 M28.6 224.81 H29.4 M28.6 235.19 H29.4 M28.6 245.56 H29.4 M28.6 255.94 H29.4 M28.6 266.31 H29.4 M28.6 276.69 H29.4 M28.6 287.06 H29.4 M28.6 297.44 H29.4 M28.6 307.81 H29.4 M28.6 318.19 H29.4 M28.6 328.56 H29.4 M28.6 338.94 H29.4 M28.6 349.31 H29.4 M28.6 359.69 H29.4 M28.6 370.06 H29.4 M28.6 380.44 H29.4 M28.6 390.81 H29.4 M28.6 401.19 H29.4 M28.6 411.56 H29.4 M28.6 421.94 H29.4 M28.6 432.31 H29.4 M28.6 442.69 H29.4 M28.6 453.06 H29.4 M28.6 463.44 H29.4 M28.6 473.81 H29.4 M28.6 484.19 H29.4 M28.6 494.56 H29.4 M28.6 504.94 H29.4 M28.6 515.31 H29.4 M28.6 525.69 H29.4 M28.6 536.06 H29.4 M28.6 546.44 H29.4 M28.6 556.81 H29.4 M28.6 567.19 H29.4 M28.6 577.56 H29.4 M28.6 587.94 H29.4" stroke="#969696" stroke-width=".7"/><text transform="translate(31.2 209.25) rotate(-90)" x="0" y="0" font-size="6.2" fill="#4a4a4a" text-anchor="middle" font-family="Liberation Sans">9</text><text transform="translate(31.2 230.00) rotate(-90)" x="0" y="0" font-size="6.2" fill="#4a4a4a" text-anchor="middle" font-family="Liberation Sans">8</text><text transform="translate(31.2 250.75) rotate(-90)" x="0" y="0" font-size="6.2" fill="#4a4a4a" text-anchor="middle" font-family="Liberation Sans">7</text><text transform="translate(31.2 271.50) rotate(-90)" x="0" y="0" font-size="6.2" fill="#4a4a4a" text-anchor="middle" font-family="Liberation Sans">6</text><text transform="translate(31.2 292.25) rotate(-90)" x="0" y="0" font-size="6.2" fill="#4a4a4a" text-anchor="middle" font-family="Liberation Sans">5</text><text transform="translate(31.2 313.00) rotate(-90)" x="0" y="0" font-size="6.2" fill="#4a4a4a" text-anchor="middle" font-family="Liberation Sans">4</text><text transform="translate(31.2 333.75) rotate(-90)" x="0" y="0" font-size="6.2" fill="#4a4a4a" text-anchor="middle" font-family="Liberation Sans">3</text><text transform="translate(31.2 354.50) rotate(-90)" x="0" y="0" font-size="6.2" fill="#4a4a4a" text-anchor="middle" font-family="Liberation Sans">2</text><text transform="translate(31.2 375.25) rotate(-90)" x="0" y="0" font-size="6.2" fill="#4a4a4a" text-anchor="middle" font-family="Liberation Sans">1</text><text transform="translate(31.2 396.00) rotate(-90)" x="0" y="0" font-size="6.2" fill="#4a4a4a" text-anchor="middle" font-family="Liberation Sans">0</text><text transform="translate(31.2 416.75) rotate(-90)" x="0" y="0" font-size="6.2" fill="#4a4a4a" text-anchor="middle" font-family="Liberation Sans">1</text><text transform="translate(31.2 437.50) rotate(-90)" x="0" y="0" font-size="6.2" fill="#4a4a4a" text-anchor="middle" font-family="Liberation Sans">2</text><text transform="translate(31.2 458.25) rotate(-90)" x="0" y="0" font-size="6.2" fill="#4a4a4a" text-anchor="middle" font-family="Liberation Sans">3</text><text transform="translate(31.2 479.00) rotate(-90)" x="0" y="0" font-size="6.2" fill="#4a4a4a" text-anchor="middle" font-family="Liberation Sans">4</text><text transform="translate(31.2 499.75) rotate(-90)" x="0" y="0" font-size="6.2" fill="#4a4a4a" text-anchor="middle" font-family="Liberation Sans">5</text><text transform="translate(31.2 520.50) rotate(-90)" x="0" y="0" font-size="6.2" fill="#4a4a4a" text-anchor="middle" font-family="Liberation Sans">6</text><text transform="translate(31.2 541.25) rotate(-90)" x="0" y="0" font-size="6.2" fill="#4a4a4a" text-anchor="middle" font-family="Liberation Sans">7</text><text transform="translate(31.2 562.00) rotate(-90)" x="0" y="0" font-size="6.2" fill="#4a4a4a" text-anchor="middle" font-family="Liberation Sans">8</text><text transform="translate(31.2 582.75) rotate(-90)" x="0" y="0" font-size="6.2" fill="#4a4a4a" text-anchor="middle" font-family="Liberation Sans">9</text></svg>
<div class="a" style="left:-4px;top:348px;width:50.4px;height:11px;background:#fff;border:1px solid #c4c4c4;box-shadow:.5px .5px 1px rgba(0,0,0,.15)"></div>
<div class="t" style="left:0.4px;top:351.26px;font-size:6.4px;color:#5a5a5a;">ий треугольник</div>
<div class="a" style="left:188px;top:198px;width:527px;height:396px;background:#fefefe"></div>
<div class="t" style="left:229.9px;top:240.33px;font-size:32.2px;color:#000;font-family:'Liberation Serif';letter-spacing:-0.085px;">Дидактический</div>
<div class="t" style="left:449.7px;top:240.33px;font-size:32.2px;color:#000;font-family:'Liberation Serif';letter-spacing:-0.113px;">треугольник</div>
<div class="t" style="left:363.4px;top:312.80px;font-size:13.4px;color:#111;font-family:'Liberation Serif';letter-spacing:-0.211px;">Учитель</div>
<div class="t" style="left:215.2px;top:469.00px;font-size:13.4px;color:#111;font-family:'Liberation Serif';letter-spacing:-0.130px;">Содержание</div>
<div class="t" style="left:485.9px;top:469.00px;font-size:13.4px;color:#111;font-family:'Liberation Serif';letter-spacing:-0.320px;">Ученик</div>
<svg class="a" style="left:300px;top:340px" width="170" height="140" viewBox="300 340 170 140">
<defs>
<clipPath id="shc"><rect x="322.9" y="350.8" width="128.8" height="117.7"/></clipPath>
<filter id="shb" x="-30%" y="-30%" width="160%" height="160%"><feGaussianBlur stdDeviation="7"/></filter><filter id="eb" x="-30%" y="-30%" width="160%" height="160%" filterUnits="userSpaceOnUse"><feGaussianBlur stdDeviation="1"/></filter>
<filter id="tb" x="-50%" y="-50%" width="200%" height="200%"><feGaussianBlur stdDeviation="7"/></filter>
<clipPath id="tric"><path d="M379.1 351.3 L442.2 461.1 L322.9 461.1 Z"/></clipPath>
<linearGradient id="tg2" gradientUnits="userSpaceOnUse" x1="336" y1="430" x2="400" y2="398"><stop offset="0" stop-color="#ff9420"/><stop offset=".4" stop-color="#ffa848"/><stop offset=".8" stop-color="#ff9018"/><stop offset="1" stop-color="#ff8b0c"/></linearGradient>
</defs>
<g clip-path="url(#shc)"><path d="M392.1 360.3 L457.2 471.1 L333.9 471.1 Z" fill="#1e1e1e" opacity=".62" filter="url(#shb)"/></g>
<path d="M379.1 351.3 L442.2 461.1 L322.9 461.1 Z" fill="url(#tg2)"/>
<g clip-path="url(#tric)">
<path d="M378 362 L334 452 L366 454 L388 396 Z" fill="#ffc27c" opacity=".4" filter="url(#tb)"/>
<path d="M379.1 351.3 L322.9 461.1" stroke="#f27c00" stroke-width="2.2" opacity=".8" filter="url(#eb)"/>
<path d="M322.9 461.1 H442.2" stroke="#f27c00" stroke-width="2" opacity=".6" filter="url(#eb)"/>
</g>
</svg>
<div class="a" style="left:23px;top:604px;width:843px;height:1px;background:#c2c2c2"></div>
<div class="t" style="left:28.2px;top:610.45px;font-size:6.6px;color:#555;letter-spacing:0.564px;">Щелкните, чтобы добавить заметки</div>
<div class="a" style="left:866px;top:175px;width:8px;height:455px;background:#dfdee1"></div>
<div class="a" style="left:866px;top:177.2px;width:8px;height:7.4px;background:#fff;border:1px solid #c6c6c6"></div>
<svg class="a" style="left:866px;top:177px" width="9" height="8" viewBox="0 0 9 8"><path d="M2.2 5.2 L4.2 2.8 L6.2 5.2 Z" fill="#666"/></svg>
<div class="a" style="left:866px;top:200.6px;width:8px;height:15px;background:#fff;border:1px solid #c6c6c6"></div>
<div class="a" style="left:866px;top:566.6px;width:8.4px;height:7.6px;background:#fff;border:1px solid #c6c6c6"></div>
<svg class="a" style="left:866px;top:566.6px" width="9" height="8" viewBox="0 0 9 8"><path d="M2.2 2.8 L4.2 5.2 L6.2 2.8 Z" fill="#666"/></svg>
<div class="a" style="left:866px;top:574.4px;width:9px;height:56px;background:#e6e6e6"></div>
<svg class="a" style="left:866px;top:575px" width="9" height="20" viewBox="0 0 9 20"><path d="M2.8 3.4 L4.3 1.8 L5.8 3.4 M2.8 5.6 L4.3 4 L5.8 5.6" fill="none" stroke="#666" stroke-width=".7"/><path d="M2.8 12.4 L4.3 14 L5.8 12.4 M2.8 14.6 L4.3 16.2 L5.8 14.6" fill="none" stroke="#666" stroke-width=".7"/><circle cx="4.3" cy="7.4" r=".5" fill="#666"/><circle cx="4.3" cy="10.8" r=".5" fill="#666"/></svg>
<div class="a" style="left:0;top:630.3px;width:875px;height:11.6px;background:#f1f1f1"></div>
<div class="a" style="left:689.3px;top:630.3px;width:19.4px;height:11.6px;background:#c9c9c9"></div>
<div class="t" style="left:600px;top:633.61px;font-size:6.3px;color:#444;letter-spacing:-0.232px;">Заметки</div>
<div class="t" style="left:642.8px;top:633.61px;font-size:6.3px;color:#444;letter-spacing:-0.007px;">Примечания</div>
<div class="t" style="left:841.4px;top:633.98px;font-size:5.6px;color:#444;letter-spacing:-0.219px;">105 %</div>
<svg class="a" style="left:585px;top:630px" width="290" height="12" viewBox="585 630 290 12">
<g stroke="#6a6a6a" stroke-width=".6" fill="none">
<path d="M591.4 637.2 H597.2 M591.4 639 H597.2 M592.6 635.4 H596 M594.3 633.4 V635.4"/>
<path d="M633.2 633 H640.2 V638 H636.4 L634.6 639.8 V638 H633.2 Z" fill="#555"/>
<rect x="695.2" y="632.8" width="7.4" height="6.4"/><path d="M696.8 634.8 H701 M695.2 636.8 H702.6"/>
<rect x="715.6" y="633" width="2.8" height="2.2"/><rect x="719.8" y="633" width="2.8" height="2.2"/><rect x="715.6" y="636.6" width="2.8" height="2.2"/><rect x="719.8" y="636.6" width="2.8" height="2.2"/>
<path d="M735.4 633 V639.2 M738.4 633 V639.2 M741.2 633 V639.2 M736.6 634.4 H737.4 M736.6 636 H737.4 M739.4 634.4 H740.4 M739.4 636 H740.4"/>
<path d="M754.8 633.2 H762.2 M755.8 633.2 V636.6 H761.2 V633.2 M758.5 636.6 V638.6 M756.8 639.2 H760.2"/>
<path d="M771.6 636 H774.4"/><path d="M832 636 H835.2 M833.6 634.4 V637.6"/>
<path d="M777 636 H830" stroke="#9a9a9a"/>
<rect x="864.4" y="632.8" width="6.4" height="6.4"/><path d="M865.4 633.8 L866.8 635.2 M869.8 633.8 L868.4 635.2 M865.4 638.2 L866.8 636.8 M869.8 638.2 L868.4 636.8"/>
</g>
<rect x="803.4" y="633.2" width="1.5" height="5.6" fill="#666"/>
</svg>

<!-- ===== RIGHT PANEL ===== -->
<div class="a" style="left:874.6px;top:0;width:126px;height:660.8px;background:#fff"></div>
<svg class="a" style="left:888px;top:8px" width="14" height="11" viewBox="0 0 14 11"><path d="M3.6 3.6 L7 6.8 L10.4 3.6" fill="none" stroke="#5a5a6e" stroke-width="1.3" stroke-linecap="round" stroke-linejoin="round"/></svg>
<div class="t" style="left:969.2px;top:7.6px;font-size:10.4px;color:#232333;font-weight:bold">Участники</div>
<div class="a" style="left:890.7px;top:39.3px;width:130px;height:26.4px;border:1px solid #b9b9d2;border-radius:6px;background:#fff"></div>
<svg class="a" style="left:898px;top:45px" width="16" height="16" viewBox="0 0 16 16"><circle cx="6.6" cy="7" r="3.7" fill="none" stroke="#8a8a9c" stroke-width="1"/><path d="M9.3 9.8 L12.2 12.8" stroke="#8a8a9c" stroke-width="1.1" stroke-linecap="round"/></svg>
<div class="t" style="left:914.3px;top:46.94px;font-size:10.5px;color:#74748c;letter-spacing:-0.138px;">Найти участника</div>
<svg class="a" style="left:890.4px;top:71.8px" width="22.7" height="22.7" viewBox="0 0 22.7 22.7"><defs><clipPath id="pc1"><rect width="22.7" height="22.7" rx="5.6"/></clipPath><filter id="pb1" x="-20%" y="-20%" width="140%" height="140%"><feGaussianBlur stdDeviation=".75"/></filter></defs><g clip-path="url(#pc1)"><rect width="22.7" height="22.7" fill="#170a0a"/><g filter="url(#pb1)"><rect x="0" y="14" width="4" height="9" fill="#0c3a3a"/><circle cx="3" cy="4.4" r="1.1" fill="#a82a24"/><circle cx="5.2" cy="2.2" r=".8" fill="#c8962a"/><circle cx="1.6" cy="8" r=".9" fill="#b8561e"/><circle cx="4.6" cy="7.4" r=".9" fill="#8a1a1a"/><circle cx="3.4" cy="11.4" r="1" fill="#c8761e"/><circle cx="6" cy="5" r=".7" fill="#1e6a4a"/><circle cx="5.4" cy="12.6" r=".8" fill="#a8341e"/><path d="M7.2 14.4 Q6.6 4 11.8 3.2 Q17 3.6 16.8 14.4 Z" fill="#6a2a20"/><ellipse cx="11.8" cy="8.6" rx="2.7" ry="3.3" fill="#cfa594"/><path d="M8.8 6.6 Q11.6 4.2 14.8 6.6 L14.6 5.2 Q11.8 3 9 5.2 Z" fill="#7a3226"/><path d="M2.6 22.7 Q3.4 14.4 9.4 13.6 L14 13.6 Q20 14.4 20.4 22.7 Z" fill="#8c8e58"/><path d="M10 12 L13.4 12 L11.6 17 Z" fill="#d4aa98"/><path d="M11.6 16 V22.7" stroke="#6e7044" stroke-width=".5"/><rect x="19.4" y="19" width="3.3" height="3.7" fill="#1e5a5a"/></g></g></svg>
<div class="t" style="left:923px;top:79.90px;font-size:10px;color:#3a3a4c;letter-spacing:.17px">Надежда Ткаче...</div>
<div class="a" style="left:890.4px;top:105.8px;width:22.7px;height:22.7px;border-radius:5.6px;background:#1fa083;color:#fff;font-weight:bold;font-size:10.4px;text-align:center;line-height:25.4px;">Г</div>
<div class="t" style="left:923px;top:113.90px;font-size:10px;color:#3a3a4c;letter-spacing:.17px">Галина Макотрова</div>
<div class="a" style="left:890.4px;top:139.8px;width:22.7px;height:22.7px;border-radius:5.6px;background:#34465e;color:#fff;font-weight:bold;font-size:10.4px;text-align:center;line-height:25.4px;">Г</div>
<div class="t" style="left:923px;top:147.90px;font-size:10px;color:#3a3a4c;letter-spacing:.17px">Гут Юлия Николаевна</div>
<div class="a" style="left:890.4px;top:173.8px;width:22.7px;height:22.7px;border-radius:5.6px;background:#34465e;color:#fff;font-weight:bold;font-size:10.4px;text-align:center;line-height:25.4px;">E</div>
<div class="t" style="left:923px;top:181.90px;font-size:10px;color:#3a3a4c;letter-spacing:.17px">Ekaterina</div>
<div class="a" style="left:890.4px;top:207.8px;width:22.7px;height:22.7px;border-radius:5.6px;background:#2db35d;color:#fff;font-weight:bold;font-size:10.4px;text-align:center;line-height:25.4px;letter-spacing:-.2px;">H1</div>
<div class="t" style="left:923px;top:215.90px;font-size:10px;color:#3a3a4c;letter-spacing:.17px">HONOR 10i</div>
<div class="a" style="left:890.4px;top:241.8px;width:22.7px;height:22.7px;border-radius:5.6px;background:#cf3a2c;color:#fff;font-weight:bold;font-size:10.4px;text-align:center;line-height:25.4px;letter-spacing:-.2px;">I(</div>
<div class="t" style="left:923px;top:249.90px;font-size:10px;color:#3a3a4c;letter-spacing:.17px">iPhone (Екатерина)</div>
<svg class="a" style="left:890.4px;top:275.8px" width="22.7" height="22.7" viewBox="0 0 22.7 22.7"><defs><clipPath id="pc2"><rect width="22.7" height="22.7" rx="5.6"/></clipPath><filter id="pb2" x="-20%" y="-20%" width="140%" height="140%"><feGaussianBlur stdDeviation=".8"/></filter></defs><g clip-path="url(#pc2)"><rect width="22.7" height="22.7" fill="#ebe386"/><g filter="url(#pb2)"><rect x="0" y="0" width="8" height="5" fill="#c9cd52"/><rect x="1" y="5" width="5" height="8" fill="#f4f0c4"/><rect x="15" y="0" width="8" height="5" fill="#e0d66a"/><rect x="17" y="2" width="4" height="3.4" fill="#b4b070"/><rect x="16" y="7" width="7" height="7" fill="#fbf9ec"/><rect x="18" y="14" width="5" height="9" fill="#e6d860"/><rect x="0" y="14" width="4" height="8" fill="#e6de70"/><path d="M4 17 Q4.6 6 8 1.6 Q11.4 -1 14.6 1.6 Q18.4 6 19 17 Z" fill="#33221c"/><ellipse cx="11.4" cy="4.8" rx="2.1" ry="2.9" fill="#d6a594"/><path d="M2.8 20.6 Q3.2 12.6 8 11.6 L15 11.6 Q19.6 12.6 20 20.6 Z" fill="#15141a"/><path d="M9 9.8 L13.8 9.8 L11.4 15.6 Z" fill="#d9ab98"/><rect x="4.2" y="20" width="15" height="2.2" rx="1" fill="#d9a48e"/></g></g></svg>
<div class="t" style="left:923px;top:283.90px;font-size:10px;color:#3a3a4c;letter-spacing:.17px">Manar Bsoul</div>
<div class="a" style="left:890.4px;top:309.8px;width:22.7px;height:22.7px;border-radius:5.6px;background:#cf3a2c;color:#fff;font-weight:bold;font-size:10.4px;text-align:center;line-height:25.4px;letter-spacing:-.2px;">YF</div>
<div class="t" style="left:923px;top:317.90px;font-size:10px;color:#3a3a4c;letter-spacing:.17px">Yulia Ferafontova</div>
<svg class="a" style="left:890.4px;top:343.8px" width="22.7" height="22.7" viewBox="0 0 22.7 22.7"><defs><clipPath id="pc3"><rect width="22.7" height="22.7" rx="5.6"/></clipPath><filter id="pb3" x="-20%" y="-20%" width="140%" height="140%"><feGaussianBlur stdDeviation=".85"/></filter></defs><g clip-path="url(#pc3)"><rect width="22.7" height="22.7" fill="#eef1f6"/><g filter="url(#pb3)"><rect x="14" y="2.6" width="9" height="1.6" fill="#a8c8ee"/><rect x="0" y="4.6" width="3" height="2.4" fill="#b8cce8"/><path d="M2.6 6 Q2.6 -.6 8.6 -.4 Q14.4 -.4 14.2 5 Q10 2.6 5 3.4 Z" fill="#5a5264"/><ellipse cx="8.2" cy="8" rx="4.6" ry="5.6" fill="#c9a9a2"/><path d="M0 22.7 L0 11.6 Q4 9.4 6.4 12.4 L9.6 17.6 L9 22.7 Z" fill="#3c5e9a"/><path d="M11 10.6 Q12 5 17 5.2 Q22.7 5.6 22.7 11 L22.7 20 Q20 22 18 21 Q21.6 14 17 9.6 Q13.6 8.6 11 10.6 Z" fill="#38262e"/><ellipse cx="15.2" cy="14.8" rx="5.4" ry="6.6" fill="#ebcdc6"/><ellipse cx="16" cy="13.8" rx="1" ry=".7" fill="#5a5470"/><ellipse cx="12.4" cy="14.4" rx=".8" ry=".6" fill="#8a6a78"/><path d="M9.4 11.4 Q10.4 13.4 9.8 15" stroke="#b06a6a" stroke-width=".8" fill="none"/><rect x="3" y="20.6" width="8" height="2.1" fill="#dfe6f2"/></g></g></svg>
<div class="t" style="left:923px;top:351.90px;font-size:10px;color:#3a3a4c;letter-spacing:.17px">Анна Рынзина</div>
<div class="a" style="left:890.4px;top:377.8px;width:22.7px;height:22.7px;border-radius:5.6px;background:#8b3fae;color:#fff;font-weight:bold;font-size:10.4px;text-align:center;line-height:25.4px;">A</div>
<div class="t" style="left:923px;top:385.90px;font-size:10px;color:#3a3a4c;letter-spacing:.17px">Архипов Павел Иванович</div>
<div class="a" style="left:890.4px;top:411.8px;width:22.7px;height:22.7px;border-radius:5.6px;background:#2bb066;color:#fff;font-weight:bold;font-size:10.4px;text-align:center;line-height:25.4px;">Б</div>
<div class="t" style="left:923px;top:419.90px;font-size:10px;color:#3a3a4c;letter-spacing:.17px">Бабенко Юлия Александровна</div>
<div class="a" style="left:890.4px;top:445.8px;width:22.7px;height:22.7px;border-radius:5.6px;background:#33465f;color:#fff;font-weight:bold;font-size:10.4px;text-align:center;line-height:25.4px;">B</div>
<div class="t" style="left:923px;top:453.90px;font-size:10px;color:#3a3a4c;letter-spacing:.17px">Виктор Николаевич</div>
<div class="a" style="left:890.4px;top:479.8px;width:22.7px;height:22.7px;border-radius:5.6px;background:#a544c0;color:#fff;font-size:14px;text-align:center;line-height:24.6px">B</div>
<div class="t" style="left:923px;top:487.90px;font-size:10px;color:#3a3a4c;letter-spacing:.17px">Виктория Подпригора</div>
<div class="a" style="left:890.4px;top:513.8px;width:22.7px;height:22.7px;border-radius:5.6px;background:#d4560a;color:#fff;font-weight:bold;font-size:10.4px;text-align:center;line-height:25.4px;">B</div>
<div class="t" style="left:923px;top:521.90px;font-size:10px;color:#3a3a4c;letter-spacing:.17px">Виорика Архипова</div>
<div class="a" style="left:890.4px;top:547.8px;width:22.7px;height:22.7px;border-radius:5.6px;background:#8b3fae;color:#fff;font-weight:bold;font-size:10.4px;text-align:center;line-height:25.4px;">E</div>
<div class="t" style="left:923px;top:555.90px;font-size:10px;color:#3a3a4c;letter-spacing:.17px">Евгения</div>
<div class="a" style="left:890.4px;top:581.8px;width:22.7px;height:22.7px;border-radius:5.6px;background:#27ad5f;color:#fff;font-weight:bold;font-size:10.4px;text-align:center;line-height:25.4px;">E</div>
<div class="t" style="left:923px;top:589.90px;font-size:10px;color:#3a3a4c;letter-spacing:.17px">Евгения Пчелкина</div>
<div class="a" style="left:899.6px;top:630px;width:66px;height:18.6px;border-radius:6px;background:#f1f1f7"></div>
<div class="t" style="left:905.6px;top:633.57px;font-size:11px;color:#2d2d3c;letter-spacing:-0.610px;">Пригласить</div>
<div class="a" style="left:989.6px;top:630px;width:66px;height:18.6px;border-radius:6px;background:#f1f1f7"></div>
<div class="t" style="left:995.4px;top:633.57px;font-size:11px;color:#2d2d3c;">Выключить</div>
<div class="t" style="left:809px;top:578.4px;font-size:16.6px;color:rgba(120,120,120,.42)">Активация Windows</div>
<div class="t" style="left:809px;top:599.6px;font-size:11.2px;letter-spacing:.36px;color:rgba(120,120,120,.42)">Чтобы активировать Windows, перейдите</div>
<div class="t" style="left:809px;top:616.6px;font-size:11.2px;letter-spacing:.36px;color:rgba(120,120,120,.42)">"Параметры".</div>

<!-- bottom -->
<div class="a" style="left:0;top:661px;width:1000px;height:6px;background:#29393f"></div>
<div class="a" style="left:244px;top:661px;width:134px;height:6px;background:#5a686b"></div>
</div>
</body></html>
